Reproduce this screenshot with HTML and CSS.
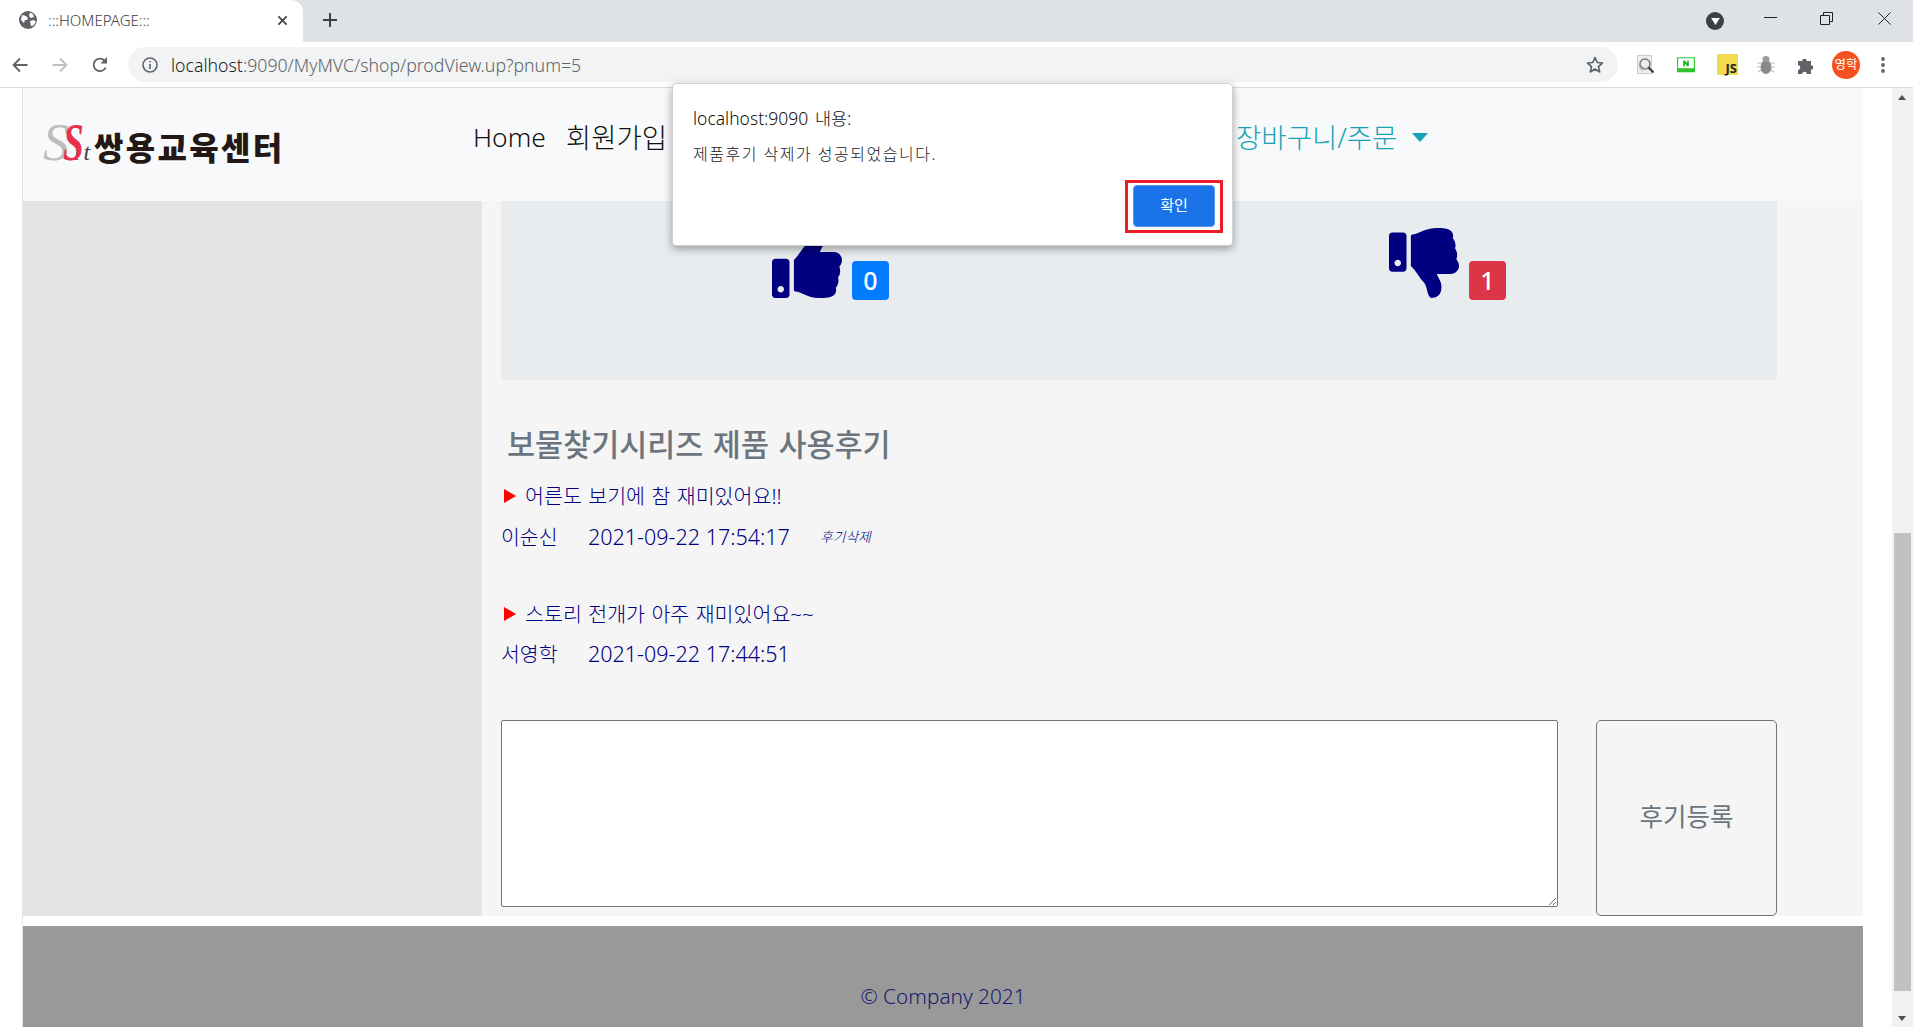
FILE: index.html
```html
<!DOCTYPE html>
<html lang="ko">
<head>
    <meta charset="UTF-8">
    <title>:::HOMEPAGE:::</title>
    <link rel="stylesheet" href="styles.css">
</head>
<body>

    <!-- 브라우저 상단 -->
    <div class="tab-strip">
        <div class="tab">
            <svg class="favicon" viewBox="0 0 18 18">
                <circle cx="9" cy="9" r="9" fill="#5f6368"/>
                <path d="M3 4l4 1 2 2-1 2-2 0-1 3-3-3zM11 1.500l3 1.500 1 3-3 1-2-2zM11 10l4-1 2 2-3 4-2 0z" fill="#fff"/>
            </svg>
            <span class="tab-title">:::HOMEPAGE:::</span>
            <svg class="tab-close" viewBox="0 0 12 12"><path d="M1.500 1.500l9 9M10.500 1.500l-9 9" stroke="#3c4043" stroke-width="1.800"/></svg>
        </div>
        <svg class="new-tab" viewBox="0 0 14 14"><path d="M7 0v14M0 7h14" stroke="#3c4043" stroke-width="2"/></svg>
        <div class="window-controls">
            <span class="tab-search"><svg viewBox="0 0 10 8"><path d="M0 0h10L5 8z" fill="#fff"/></svg></span>
            <svg class="win-min" viewBox="0 0 13 1"><path d="M0 .5h13" stroke="#222"/></svg>
            <svg class="win-max" viewBox="0 0 13 13"><path d="M.5 3.500h9v9h-9zM3.500 3.500v-3h9v9h-3" fill="none" stroke="#222"/></svg>
            <svg class="win-close" viewBox="0 0 13 13"><path d="M.5.500l12 12M12.500.500l-12 12" stroke="#222"/></svg>
        </div>
    </div>

    <div class="toolbar">
        <svg class="nav-icon" viewBox="0 0 16 16"><path d="M15.500 8H2M8 1.500L1.500 8 8 14.500" fill="none" stroke="#5f6368" stroke-width="1.800"/></svg>
        <svg class="nav-icon" viewBox="0 0 16 16"><path d="M.5 8H14M8 1.500L14.500 8 8 14.500" fill="none" stroke="#bdc1c6" stroke-width="1.800"/></svg>
        <svg class="nav-icon" viewBox="0 0 16 16"><path d="M13.700 10.500A6.300 6.300 0 1 1 12.500 3.500" fill="none" stroke="#5f6368" stroke-width="1.800"/><path d="M15 0v6.500H8.500z" fill="#5f6368"/></svg>
        <div class="omnibox">
            <svg class="info-icon" viewBox="0 0 16 16">
                <circle cx="8" cy="8" r="7" fill="none" stroke="#5f6368" stroke-width="1.600"/>
                <path d="M7.200 7h1.600v5H7.200zM7.200 4h1.600v1.600H7.200z" fill="#5f6368"/>
            </svg>
            <span class="url"><b>localhost</b>:9090/MyMVC/shop/prodView.up?pnum=5</span>
            <svg class="star-icon" viewBox="0 0 18 18"><path d="M9 1.500l2.200 5 5.300.5-4 3.600 1.200 5.300L9 13.100l-4.700 2.800 1.200-5.300-4-3.600 5.300-.5z" fill="none" stroke="#5f6368" stroke-width="1.700" stroke-linejoin="round"/></svg>
        </div>
        <div class="extensions">
            <svg class="ext-icon ext-tall" viewBox="0 0 18 20">
                <rect x="0.500" y="0.500" width="14" height="18" fill="#eee" stroke="#ccc"/>
                <circle cx="8" cy="9" r="5" fill="none" stroke="#777" stroke-width="1.500"/>
                <path d="M4 10a5 5 0 0 0 6 3M3 7a7 7 0 0 0 3 9" fill="none" stroke="#aaa"/>
                <path d="M11.500 12.500l5 5" stroke="#333" stroke-width="2"/>
            </svg>
            <svg class="ext-icon" viewBox="0 0 16 14">
                <path d="M.5.500h15v10H.5z" fill="#fff" stroke="#2fc42f"/>
                <path d="M0 10h16v3.500H0z" fill="#2fc42f"/>
                <path d="M5.500 3h1.500l2 2.400V3h1.500v5H9L7 5.600V8H5.500z" fill="#1cb51c"/>
            </svg>
            <span class="ext-js">JS</span>
            <svg class="ext-icon ext-tall" viewBox="0 0 18 20">
                <ellipse cx="9" cy="12" rx="5.500" ry="7" fill="#8a8a8a"/>
                <ellipse cx="9" cy="4" rx="3.500" ry="3" fill="#9c9c9c"/>
                <path d="M0 8h4M14 8h4M0 12h4M14 12h4M1 17l3-2M17 17l-3-2" stroke="#bbb" stroke-width="1.200"/>
            </svg>
            <svg class="ext-icon" viewBox="0 0 18 18"><path d="M1 5h4.200a2.300 2.300 0 1 1 4.600 0H14v4.200a2.300 2.300 0 1 1 0 4.600V18H9.800a2.300 2.300 0 1 0-4.600 0H1v-4.200a2.300 2.300 0 1 0 0-4.600z" fill="#5f6368"/></svg>
            <span class="avatar">영학</span>
            <svg class="kebab" viewBox="0 0 4 16"><circle cx="2" cy="2" r="1.900" fill="#5f6368"/><circle cx="2" cy="8" r="1.900" fill="#5f6368"/><circle cx="2" cy="14" r="1.900" fill="#5f6368"/></svg>
        </div>
    </div>

    <!-- 페이지 영역 -->
    <div class="viewport">
        <div class="page">
            <nav class="navbar">
                <a class="logo">
                    <span class="logo-mark"><i class="s-gray">S</i><i class="s-red">S</i><i class="s-i">i</i><i class="s-t">t</i></span>
                    <span class="logo-text">쌍용교육센터</span>
                </a>
                <a class="nav-link nav-home">Home</a>
                <a class="nav-link">회원가입</a>
                <a class="nav-link nav-cart">장바구니/주문<span class="caret"></span></a>
            </nav>

            <div class="main">
                <div class="sidebar"></div>
                <div class="content">
                    <div class="vote-box">
                        <div class="vote vote-up">
                            <svg class="thumb" viewBox="0 0 512 512"><path d="M104 224H24c-13.255 0-24 10.745-24 24v240c0 13.255 10.745 24 24 24h80c13.255 0 24-10.745 24-24V248c0-13.255-10.745-24-24-24zM64 472c-13.255 0-24-10.745-24-24s10.745-24 24-24 24 10.745 24 24-10.745 24-24 24zM384 81.452c0 42.416-25.97 66.208-33.277 94.548h101.723c33.397 0 59.397 27.746 59.553 58.098.084 17.938-7.546 37.249-19.439 49.197l-.11.11c9.836 23.337 8.237 56.037-9.308 79.469 8.681 25.895-.069 57.704-16.382 74.757 4.298 17.598 2.244 32.575-6.148 44.632C440.202 511.587 389.616 512 346.839 512l-2.845-.001c-48.287-.017-87.806-17.598-119.56-31.725-15.957-7.099-36.821-15.887-52.651-16.178-6.54-.12-11.783-5.457-11.783-11.998v-213.77c0-3.2 1.282-6.271 3.558-8.521 39.614-39.144 56.648-80.587 89.117-113.111 14.804-14.832 20.188-37.236 25.393-58.902C282.515 39.293 291.817 0 312 0c24 0 72 8 72 81.452z"/></svg>
                            <span class="badge badge-up">0</span>
                        </div>
                        <div class="vote vote-down">
                            <svg class="thumb" viewBox="0 0 512 512"><path d="M0 56v240c0 13.255 10.745 24 24 24h80c13.255 0 24-10.745 24-24V56c0-13.255-10.745-24-24-24H24C10.745 32 0 42.745 0 56zm40 200c0-13.255 10.745-24 24-24s24 10.745 24 24-10.745 24-24 24-24-10.745-24-24zm272 256c-20.183 0-29.485-39.293-33.931-57.795-5.206-21.666-10.589-44.07-25.393-58.902-32.469-32.524-49.503-73.967-89.117-113.111a11.98 11.98 0 0 1-3.558-8.521V59.901c0-6.541 5.243-11.878 11.783-11.998 15.831-.29 36.694-9.079 52.651-16.178C256.189 17.598 295.709.017 343.995 0h2.844c42.777 0 93.363.413 113.774 29.737 8.392 12.057 10.446 27.034 6.148 44.632 16.312 17.053 25.063 48.863 16.382 74.757 17.544 23.432 19.143 56.132 9.308 79.469l.11.11c11.893 11.949 19.523 31.259 19.439 49.197-.156 30.352-26.157 58.098-59.553 58.098H350.723C358.03 364.34 384 388.132 384 430.548 384 504 336 512 312 512z"/></svg>
                            <span class="badge badge-down">1</span>
                        </div>
                    </div>

                    <h3 class="review-heading">보물찾기시리즈 제품 사용후기</h3>

                    <div class="review">
                        <div class="review-title"><span class="arrow"></span>어른도 보기에 참 재미있어요!!</div>
                        <div class="review-meta">
                            <span class="review-name">이순신</span>
                            <span class="review-date">2021-09-22 17:54:17</span>
                            <a class="review-delete">후기삭제</a>
                        </div>
                    </div>
                    <div class="review">
                        <div class="review-title"><span class="arrow"></span>스토리 전개가 아주 재미있어요~~</div>
                        <div class="review-meta">
                            <span class="review-name">서영학</span>
                            <span class="review-date">2021-09-22 17:44:51</span>
                        </div>
                    </div>

                    <form class="review-form">
                        <textarea class="review-input"></textarea>
                        <button type="button" class="review-submit">후기등록</button>
                    </form>
                </div>
            </div>

            <footer class="footer">© Company 2021</footer>
        </div>

        <div class="scrollbar">
            <span class="scroll-up"></span>
            <span class="scroll-thumb"></span>
            <span class="scroll-down"></span>
        </div>
    </div>

    <!-- alert 창 -->
    <div class="alert-box">
        <div class="alert-title">localhost:9090 내용:</div>
        <div class="alert-message">제품후기 삭제가 성공되었습니다.</div>
        <div class="alert-actions">
            <span class="alert-mark"><button type="button" class="alert-ok">확인</button></span>
        </div>
    </div>

</body>
</html>
```

FILE: styles.css
```css
* {
    box-sizing: border-box;
}
body {
    margin: 0;
    width: 1913px;
    height: 1027px;
    overflow: hidden;
    position: relative;
    background-color: #fff;
    font-family: "Noto Sans", "Noto Sans CJK KR", sans-serif;
    font-weight: 300;
    color: #000080;
}

/* 탭 */
.tab-strip {
    height: 42px;
    background-color: #dee1e6;
    display: flex;
    align-items: center;
}
.tab {
    width: 303px;
    height: 42px;
    background-color: #fff;
    border-radius: 0 12px 0 0;
    display: flex;
    align-items: center;
    padding: 0 14px 2px 19px;
}
.favicon {
    width: 18px;
    height: 18px;
    margin-right: 11px;
}
.tab-title {
    flex: 1;
    font-size: 15px;
    color: #3c4043;
}
.tab-close {
    width: 11px;
    height: 11px;
    margin-right: 1px;
}
.new-tab {
    width: 14px;
    height: 14px;
    margin: 0 0 2px 20px;
}
.window-controls {
    margin-left: auto;
    display: flex;
    align-items: center;
    padding-right: 22px;
}
.tab-search {
    width: 18px;
    height: 18px;
    border-radius: 50%;
    background-color: #3c4043;
    display: flex;
    align-items: center;
    justify-content: center;
    margin-right: 40px;
}
.tab-search svg {
    width: 9px;
    height: 7px;
}
.win-min {
    width: 13px;
    height: 1px;
    margin: 0 43px 8px 0;
}
.win-max {
    width: 13px;
    height: 13px;
    margin: 0 45px 5px 0;
}
.win-close {
    width: 13px;
    height: 13px;
    margin-bottom: 5px;
}

/* 주소창 */
.toolbar {
    height: 46px;
    background-color: #fff;
    border-bottom: 1px solid #d9dadc;
    display: flex;
    align-items: center;
    padding: 0 0 0 12px;
}
.nav-icon {
    width: 16px;
    height: 16px;
    margin-right: 24px;
}
.omnibox {
    width: 1490px;
    height: 35px;
    margin-left: -4px;
    border-radius: 18px;
    background-color: #f1f3f4;
    display: flex;
    align-items: center;
    padding: 0 14px 0 14px;
}
.info-icon {
    width: 16px;
    height: 16px;
    margin-right: 13px;
}
.url {
    flex: 1;
    font-size: 17.700px;
    color: #5f6368;
}
.url b {
    font-weight: inherit;
    color: #202124;
}
.star-icon {
    width: 18px;
    height: 18px;
}
.extensions {
    display: flex;
    align-items: center;
    margin-left: 19px;
}
.ext-icon {
    width: 18px;
    height: 18px;
    margin-right: 22px;
}
.ext-tall {
    height: 20px;
}
.ext-js {
    width: 21px;
    height: 21px;
    margin-right: 19px;
    padding: 7px 1px 0 0;
    background-color: #f2dc4e;
    color: #222;
    font-size: 13px;
    font-weight: 700;
    line-height: 14px;
    text-align: right;
}
.avatar {
    width: 28px;
    height: 28px;
    margin: 0 21px 0 -5px;
    border-radius: 50%;
    background-color: #f4511e;
    color: #fff;
    font-size: 12.500px;
    font-weight: 400;
    line-height: 28px;
    text-align: center;
}
.kebab {
    width: 4px;
    height: 16px;
}

/* 페이지 */
.viewport {
    height: 939px;
    display: flex;
    overflow: hidden;
}
.page {
    width: 1841px;
    margin-left: 22px;
    border-left: 1px solid #e4e4e4;
}
.navbar {
    height: 113px;
    background-color: #f8f9fa;
    display: flex;
    align-items: center;
    font-size: 27.500px;
    color: #111;
}
.logo {
    display: flex;
    align-items: center;
    width: 450px;
    padding: 6px 0 0 20px;
}
.logo-mark {
    width: 51px;
    font-family: "Liberation Serif", serif;
    font-size: 52px;
    line-height: 34px;
    white-space: nowrap;
}
.s-gray {
    color: #bdbdbb;
}
.s-red {
    display: inline-block;
    color: #e8304f;
    font-weight: 700;
    margin-left: -6px;
    transform: scaleX(0.72);
    transform-origin: left;
}
.s-i {
    color: #444;
    font-size: 20px;
    margin-left: -18px;
}
.s-t {
    color: #444;
    font-size: 24px;
    margin-left: 4px;
}
.logo-text {
    font-size: 32px;
    font-weight: 900;
    color: #231815;
    letter-spacing: 2.300px;
    line-height: 34px;
}
.nav-link {
    margin-right: 20px;
    line-height: 50px;
    margin-bottom: 14px;
}
.nav-home {
    font-size: 26.400px;
    margin-bottom: 16px;
}
.nav-cart {
    margin-left: 549px;
    color: #17a2b8;
    display: flex;
    align-items: center;
}
.caret {
    width: 0;
    height: 0;
    margin-left: 15px;
    border-style: solid;
    border-width: 9px 8px 0;
    border-color: #17a2b8 transparent transparent;
}
.main {
    display: flex;
}
.sidebar {
    width: 459px;
    background-color: #e4e4e4;
}
.content {
    width: 1381px;
    background-color: #f5f5f5;
    padding: 0 86px 0 19px;
}
.vote-box {
    height: 179px;
    background-color: #e9ecef;
    border-radius: 0 0 5px 5px;
    display: flex;
    padding-top: 27px;
    align-items: flex-start;
}
.vote {
    display: flex;
    align-items: flex-end;
    width: 388px;
}
.vote-up {
    width: 888px;
    padding-left: 271px;
}
.thumb {
    width: 70px;
    height: 70px;
    fill: #000080;
}
.badge {
    width: 37px;
    height: 39px;
    margin: 0 0 -2px 10px;
    border-radius: 4px;
    color: #fff;
    font-size: 25px;
    font-weight: 500;
    line-height: 39px;
    text-align: center;
}
.badge-up {
    background-color: #007bff;
}
.badge-down {
    background-color: #dc3545;
}
.review-heading {
    margin: 44px 0 17px 6px;
    font-size: 30.500px;
    font-weight: 500;
    line-height: 40px;
    word-spacing: 1.500px;
    color: #6c757d;
}
.review {
    margin-bottom: 47px;
}
.review-title {
    display: flex;
    align-items: center;
    font-size: 20.600px;
    line-height: 30px;
    word-spacing: 1px;
}
.arrow {
    width: 0;
    height: 0;
    margin: 0 9px 0 3px;
    border-style: solid;
    border-width: 7px 0 7px 12px;
    border-color: transparent transparent transparent #f00;
}
.review-meta {
    display: flex;
    align-items: center;
    margin-top: 10.500px;
    line-height: 30px;
}
.review-name {
    width: 87px;
    font-size: 20.500px;
}
.review-date {
    width: 232px;
    font-size: 21.500px;
}
.review-delete {
    font-size: 13.800px;
    font-style: italic;
}
.review-form {
    display: flex;
    align-items: flex-start;
    gap: 38px;
    margin-top: 51px;
}
.review-input {
    width: 1057px;
    height: 187px;
    background-color: #fff;
    border: 1px solid #767676;
    border-radius: 2px;
}
.review-submit {
    width: 181px;
    height: 196px;
    padding-bottom: 8px;
    background-color: transparent;
    border: 1px solid #6c757d;
    border-radius: 5px;
    color: #6c757d;
    font-family: inherit;
    font-size: 25.500px;
    font-weight: 400;
}
.footer {
    height: 101px;
    margin-top: 10px;
    background-color: #999;
    color: #191970;
    font-size: 20.800px;
    text-align: center;
    padding-top: 54px;
    line-height: 32px;
}
.scrollbar {
    width: 21px;
    margin-left: 29px;
    background-color: #f1f1f1;
    position: relative;
}
.scroll-thumb {
    position: absolute;
    left: 2px;
    top: 445px;
    width: 17px;
    height: 458px;
    background-color: #c1c1c1;
}
.scroll-up,
.scroll-down {
    position: absolute;
    left: 6px;
    width: 0;
    height: 0;
    border-style: solid;
    border-color: transparent;
}
.scroll-up {
    top: 7px;
    border-width: 0 4.500px 5px;
    border-bottom-color: #505050;
}
.scroll-down {
    bottom: 6px;
    border-width: 5px 4.500px 0;
    border-top-color: #505050;
}

/* alert 창 */
.alert-box {
    position: absolute;
    left: 672px;
    top: 83px;
    width: 561px;
    height: 163px;
    background-color: #fff;
    border: 1px solid #d0d0d0;
    border-radius: 4px;
    box-shadow: 0 3px 8px rgba(0, 0, 0, 0.35);
    padding: 21px 9px 0 20px;
    color: #111;
}
.alert-title {
    font-size: 17.500px;
    line-height: 26px;
    word-spacing: 2px;
}
.alert-message {
    margin-top: 11px;
    font-size: 16px;
    letter-spacing: 1.500px;
    line-height: 24px;
    color: #202124;
}
.alert-actions {
    display: flex;
    justify-content: flex-end;
    margin-top: 14px;
}
.alert-mark {
    display: block;
    width: 98px;
    height: 53px;
    border: 3px solid #ed1c24;
    padding: 2px 5px;
}
.alert-ok {
    width: 82px;
    height: 42px;
    padding-bottom: 4px;
    background-color: #1a73e8;
    border: 1px solid #5a95f5;
    border-radius: 4px;
    color: #fff;
    font-family: inherit;
    font-size: 15px;
}
```
